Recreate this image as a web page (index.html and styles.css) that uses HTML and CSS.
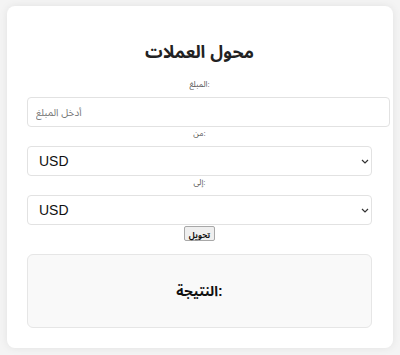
FILE: index.html
```html
<!DOCTYPE html>
<html lang="ar">
<head>
<meta charset="utf-8">
<link rel="stylesheet" href="styles.css">
</head>
<body>
<div class="card">
  <h2 class="title">محول العملات</h2>
  <label class="label">المبلغ:</label>
  <input class="amount" type="text" placeholder="أدخل المبلغ">
  <label class="label">من:</label>
  <div class="select-wrap">
    <select class="currency"><option>USD</option></select>
    <svg class="chev" width="8" height="5" viewBox="0 0 8 5"><path d="M1 1 L4 4 L7 1" fill="none" stroke="#333" stroke-width="1.2"/></svg>
  </div>
  <label class="label">إلى:</label>
  <div class="select-wrap">
    <select class="currency"><option>USD</option></select>
    <svg class="chev" width="8" height="5" viewBox="0 0 8 5"><path d="M1 1 L4 4 L7 1" fill="none" stroke="#333" stroke-width="1.2"/></svg>
  </div>
  <button class="convert">تحويل</button>
  <div class="result"><span class="result-text">النتيجة:</span></div>
</div>
</body>
</html>
```
FILE: styles.css
```css
html, body {
  margin: 0;
  padding: 0;
}
body {
  background: #f4f4f4;
  font-family: "Liberation Sans", "Noto Sans Arabic", "Noto Naskh Arabic", "DejaVu Sans", sans-serif;
  width: 400px;
  height: 355px;
  overflow: hidden;
}
.card {
  margin: 6px 7px 0 7px;
  background: #fff;
  border-radius: 8px;
  box-shadow: 0 0 8px rgba(0,0,0,0.08);
  padding: 20px 21px 20px 20px;
  display: flex;
  flex-direction: column;
  align-items: center;
}
.title {
  margin: 13px 0 0 0;
  font-size: 17.5px;
  line-height: 26px;
  font-weight: bold;
  color: #222;
}
.label {
  display: block;
  font-size: 8px;
  line-height: 12px;
  color: #555;
  margin: 14px 0 6px 0;
}
.amount + .label, .select-wrap + .label {
  margin-top: 1px;
}
.amount {
  align-self: flex-start;
  box-sizing: content-box;
  width: 100%;
  height: 28px;
  padding: 0 8px;
  margin: 0;
  border: 1px solid #e2e2e2;
  border-radius: 4px;
  font-family: inherit;
  font-size: 10px;
  outline: none;
}
.amount::placeholder {
  color: #777;
}
.select-wrap {
  position: relative;
  align-self: stretch;
  display: flex;
}
.currency {
  appearance: none;
  -webkit-appearance: none;
  box-sizing: border-box;
  width: 100%;
  height: 30px;
  margin: 0;
  padding: 0 11px;
  border: 1px solid #e2e2e2;
  border-radius: 4px;
  background: #fff;
  font-family: inherit;
  font-size: 14px;
  color: #111;
}
.chev {
  position: absolute;
  right: 3px;
  top: 13px;
  pointer-events: none;
}
.convert {
  margin: 1px 0 0 0;
  height: 15px;
  padding: 0 4px;
  font-family: inherit;
  font-size: 8px;
  font-weight: bold;
  color: #111;
  background: #efefef;
  border: 1px solid #a8a8a8;
  border-radius: 2px;
}
.result {
  align-self: stretch;
  margin-top: 13px;
  height: 72px;
  background: #f9f9f9;
  border: 1px solid #e6e6e6;
  border-radius: 6px;
  display: flex;
  align-items: center;
  justify-content: center;
}
.result-text {
  font-size: 14px;
  font-weight: bold;
  color: #111;
}
```
